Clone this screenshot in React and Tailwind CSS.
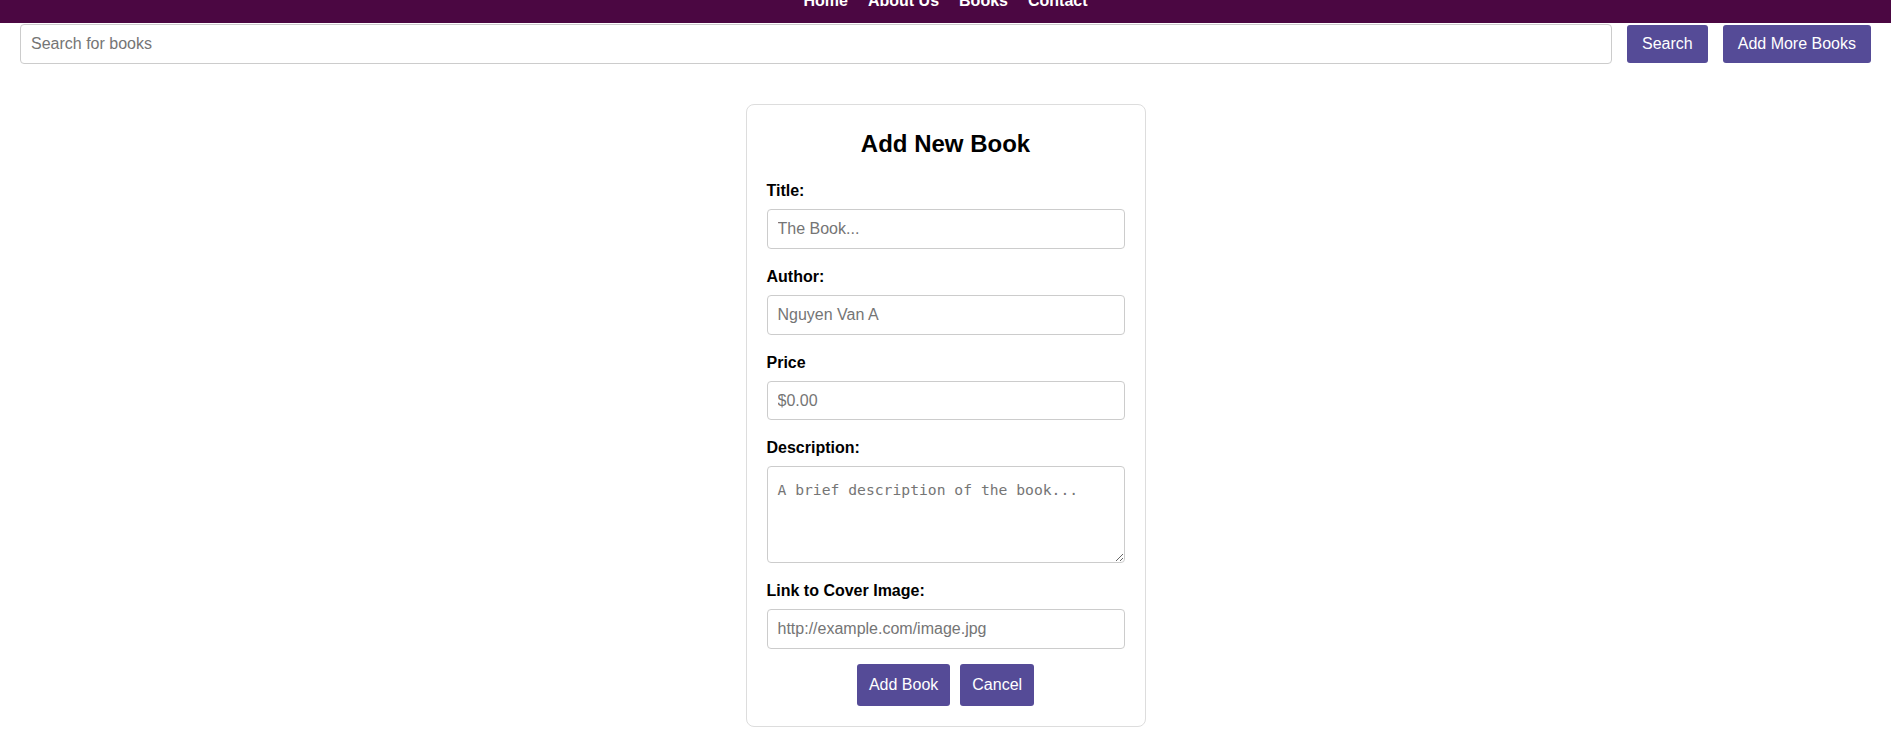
import { useState } from 'react';

const navLinks = ['Home', 'About Us', 'Books', 'Contact'];

function Field({ label, placeholder, h = 'h-[40px]' }) {
  return (
    <div className="mb-[19px]">
      <label className="block font-bold text-[16px] leading-[18px] mb-[9px]">{label}</label>
      <input
        type="text"
        placeholder={placeholder}
        className={`block w-full ${h} px-[10px] border border-[#cccccc] rounded-[4px] text-[16px] placeholder:text-[#757575] outline-none`}
      />
    </div>
  );
}

export default function App() {
  const [query, setQuery] = useState('');

  return (
    <div className="min-h-screen bg-white text-black font-['Liberation_Sans',Arial,sans-serif]">
      <header className="h-[23px] bg-[#4b0742] overflow-hidden">
        <nav className="flex justify-center gap-5 -mt-[8px] text-white font-bold text-[16px] leading-[18px]">
          {navLinks.map((link) => (
            <a key={link} href="#" className="text-white">
              {link}
            </a>
          ))}
        </nav>
      </header>

      {/* Search row */}
      <div className="flex items-center gap-[15px] px-5 mt-[1px]">
        <input
          type="text"
          value={query}
          onChange={(e) => setQuery(e.target.value)}
          placeholder="Search for books"
          className="flex-1 h-[40px] px-[10px] border border-[#cccccc] rounded-[4px] text-[16px] placeholder:text-[#757575] outline-none"
        />
        <button className="h-[38px] px-[15px] bg-[#554b97] text-white text-[16px] rounded-[3px]">
          Search
        </button>
        <button className="h-[38px] px-[15px] bg-[#554b97] text-white text-[16px] rounded-[3px]">
          Add More Books
        </button>
      </div>

      {/* Add book form */}
      <div className="w-[400px] mx-auto mt-[40px] border border-[#dddddd] rounded-[8px] p-5">
        <h2 className="text-center font-bold text-[24px] leading-[28px] mt-[5px] mb-[24px]">Add New Book</h2>

        <Field label="Title:" placeholder="The Book..." />
        <Field label="Author:" placeholder="Nguyen Van A" />
        <Field label="Price" placeholder="$0.00" h="h-[39px]" />

        <div className="mb-[19px]">
          <label className="block font-bold text-[16px] leading-[18px] mb-[9px]">Description:</label>
          <textarea
            placeholder="A brief description of the book..."
            className="block w-full h-[97px] px-[10px] pt-[12px] border border-[#cccccc] rounded-[4px] font-['DejaVu_Sans_Mono',monospace] text-[14.7px] placeholder:text-[#757575] outline-none"
          />
        </div>

        <div>
          <label className="block font-bold text-[16px] leading-[18px] mb-[9px]">Link to Cover Image:</label>
          <input
            type="text"
            placeholder="http://example.com/image.jpg"
            className="block w-full h-[40px] px-[10px] border border-[#cccccc] rounded-[4px] text-[16px] placeholder:text-[#757575] outline-none"
          />
        </div>

        <div className="flex justify-center gap-[10px] mt-[15px]">
          <button className="h-[42px] px-[12px] bg-[#554b97] text-white text-[16px] rounded-[3px]">Add Book</button>
          <button className="h-[42px] px-[12px] bg-[#554b97] text-white text-[16px] rounded-[3px]">Cancel</button>
        </div>
      </div>
    </div>
  );
}
